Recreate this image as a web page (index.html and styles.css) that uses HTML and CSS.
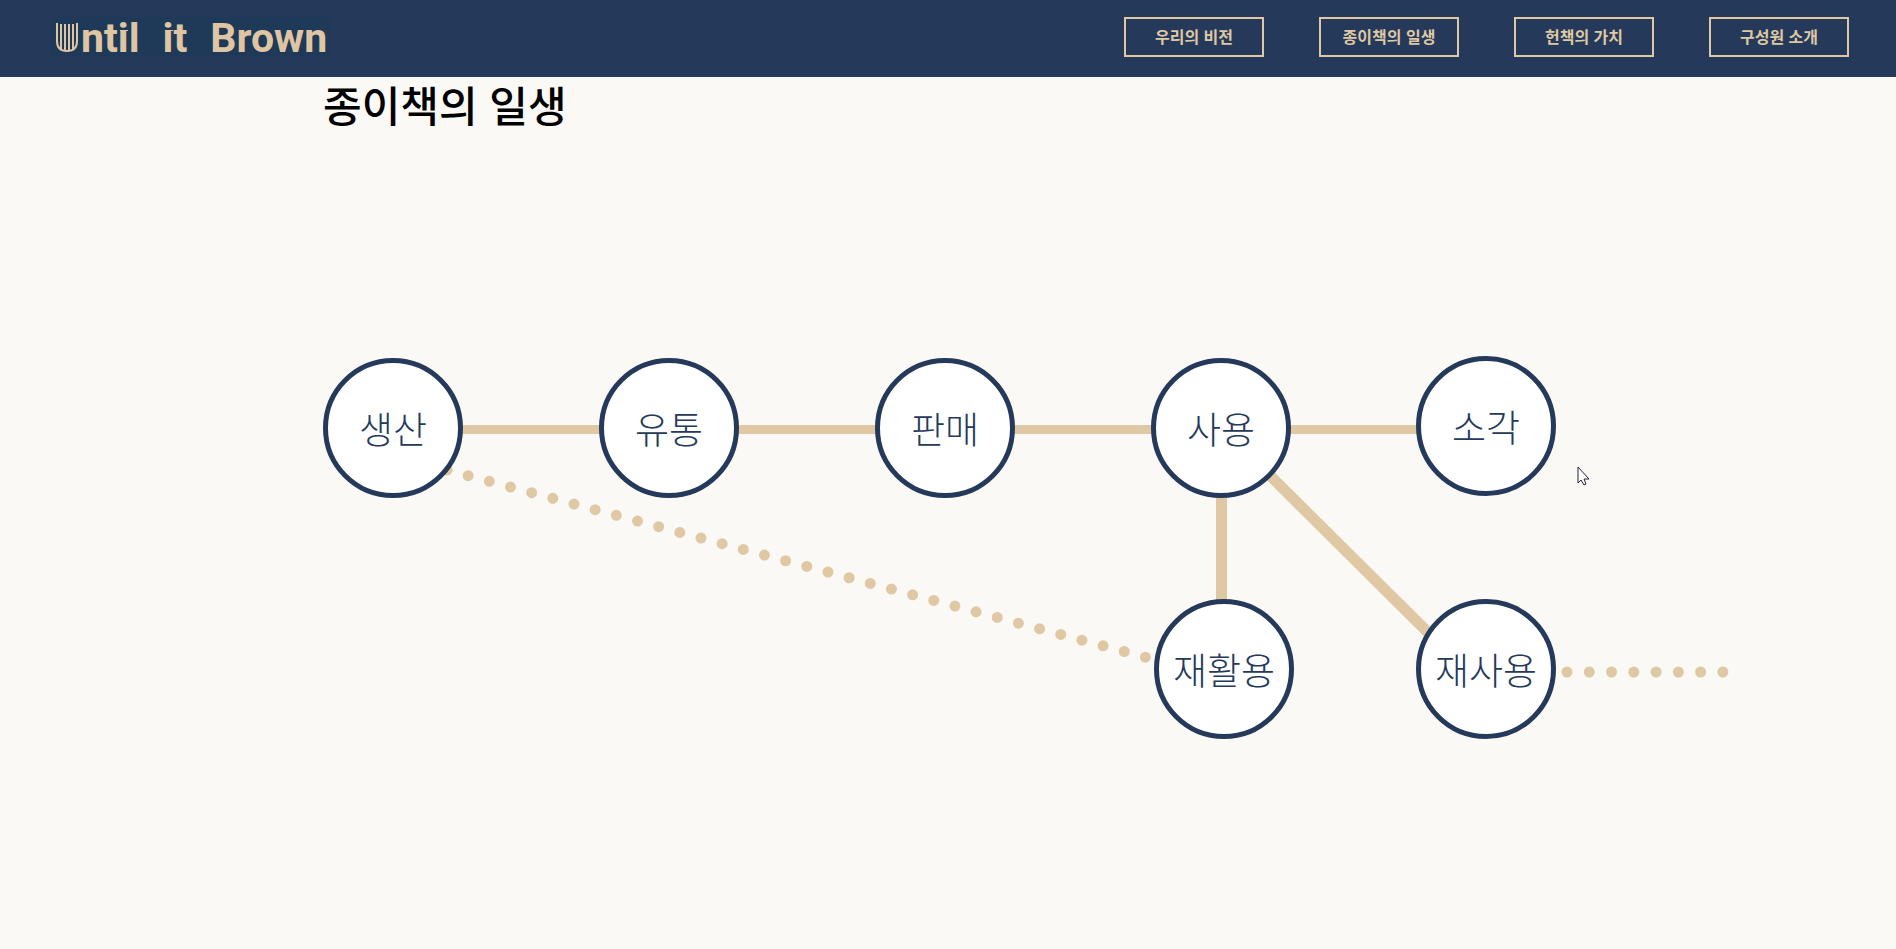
FILE: index.html
```html
<!DOCTYPE html>
<html lang="ko">
<head>
<meta charset="utf-8">
<title>Until it Brown</title>
<link rel="stylesheet" href="styles.css">
</head>
<body>
<header class="header">
  <a class="logo" href="#" aria-label="Until it Brown">
    <svg class="logo-mark" viewBox="0 0 22 30" aria-hidden="true">
      <path class="logo-cover" d="M1 0V18Q1 28 11 28Q21 28 21 18V0"/>
      <path class="logo-pages" d="M5 1V26M9 1V27M13 1V27M17 1V26"/>
    </svg>
    <span class="logo-words">
      <span>nt<span class="striped">i</span>l</span>
      <span><span class="striped">i</span>t</span>
      <span>Brown</span>
    </span>
  </a>
  <nav class="nav">
    <a class="nav-link" href="#vision">우리의 비전</a>
    <a class="nav-link" href="#life">종이책의 일생</a>
    <a class="nav-link" href="#value">헌책의 가치</a>
    <a class="nav-link" href="#members">구성원 소개</a>
  </nav>
</header>
<main class="section" id="life">
  <h1 class="title">종이책의 일생</h1>
  <div class="diagram">
    <svg class="links" viewBox="0 0 1250 400" aria-hidden="true">
      <rect class="bar" x="70" y="70" width="1093" height="9"/>
      <rect class="bar" x="893" y="72" width="11" height="240"/>
      <path class="link" d="M896 70L1163 335"/>
      <path class="link-dots" pathLength="67" d="M124 115L833 305"/>
      <path class="link-dots" pathLength="15" d="M1244 317H1411"/>
    </svg>
    <div class="node produce">생산</div>
    <div class="node distribute">유통</div>
    <div class="node sell">판매</div>
    <div class="node use">사용</div>
    <div class="node burn">소각</div>
    <div class="node recycle">재활용</div>
    <div class="node reuse">재사용</div>
    <svg class="pointer" viewBox="0 0 13 20" aria-hidden="true">
      <path d="M1 1V17L4 14L7 19L9 18L7 13H12Z"/>
    </svg>
  </div>
</main>
</body>
</html>
```
FILE: styles.css
```css
* {
  box-sizing: border-box;
}

body {
  margin: 0;
  background: #fbf9f5;
  color: #000;
  font-family: "Noto Sans CJK KR", sans-serif;
  overflow-x: hidden;
}

.header {
  display: flex;
  align-items: center;
  justify-content: space-between;
  padding: 17px 47px 20px 51px;
  background: #253a5b;
}

.logo {
  display: flex;
  align-items: center;
  gap: 3px;
  height: 40px;
  padding: 2px 4px 0 5px;
  background: #1f3a58;
  color: #dfc5a2;
  font: 700 41px/40px Roboto, sans-serif;
  text-decoration: none;
}

.logo-mark {
  width: 22px;
  height: 30px;
  fill: none;
  stroke: #dfc5a2;
}

.logo-cover {
  stroke-width: 2;
}

.logo-pages {
  stroke-width: 2;
}

.logo-words {
  display: flex;
  gap: 23px;
}

.striped {
  position: relative;
}

.striped::after {
  content: "";
  position: absolute;
  left: 2px;
  top: 16px;
  width: 8px;
  height: 1px;
  background: #dfc5a2;
}

.nav {
  display: flex;
  gap: 55px;
}

.nav-link {
  width: 140px;
  padding-bottom: 2px;
  border: 2px solid #dfc8a3;
  color: #dfc8a3;
  font-size: 16px;
  font-weight: 700;
  line-height: 34px;
  text-align: center;
  text-decoration: none;
}

.section {
  max-width: 1250px;
  margin: 0 auto;
}

.title {
  margin: 0;
  font-size: 42px;
  font-weight: 500;
  line-height: 54px;
}

.diagram {
  position: relative;
  height: 400px;
  margin-top: 224px;
}

.links {
  position: absolute;
  top: 0;
  left: 0;
  width: 1250px;
  height: 400px;
  overflow: visible;
  fill: none;
  stroke: #dfc8a3;
}

.bar {
  fill: #dfc8a3;
  stroke: none;
}

.link {
  stroke-width: 11;
}

.link-dots {
  stroke-width: 11;
  stroke-linecap: round;
  stroke-dasharray: 0 2;
}

.node {
  position: absolute;
  width: 140px;
  height: 140px;
  border: 5px solid #253a5b;
  border-radius: 50%;
  background: #fff;
  color: #253a5b;
  font-size: 37px;
  font-weight: 300;
  line-height: 130px;
  text-align: center;
  white-space: nowrap;
}

.produce { left: 0; top: 3px; }
.distribute { left: 276px; top: 3px; }
.sell { left: 552px; top: 3px; }
.use { left: 828px; top: 3px; }
.burn { left: 1093px; top: 1px; }
.recycle { left: 831px; top: 244px; }
.reuse { left: 1093px; top: 244px; }

.pointer {
  position: absolute;
  left: 1254px;
  top: 111px;
  width: 13px;
  height: 20px;
  fill: #fff;
  stroke: #223;
}
```
